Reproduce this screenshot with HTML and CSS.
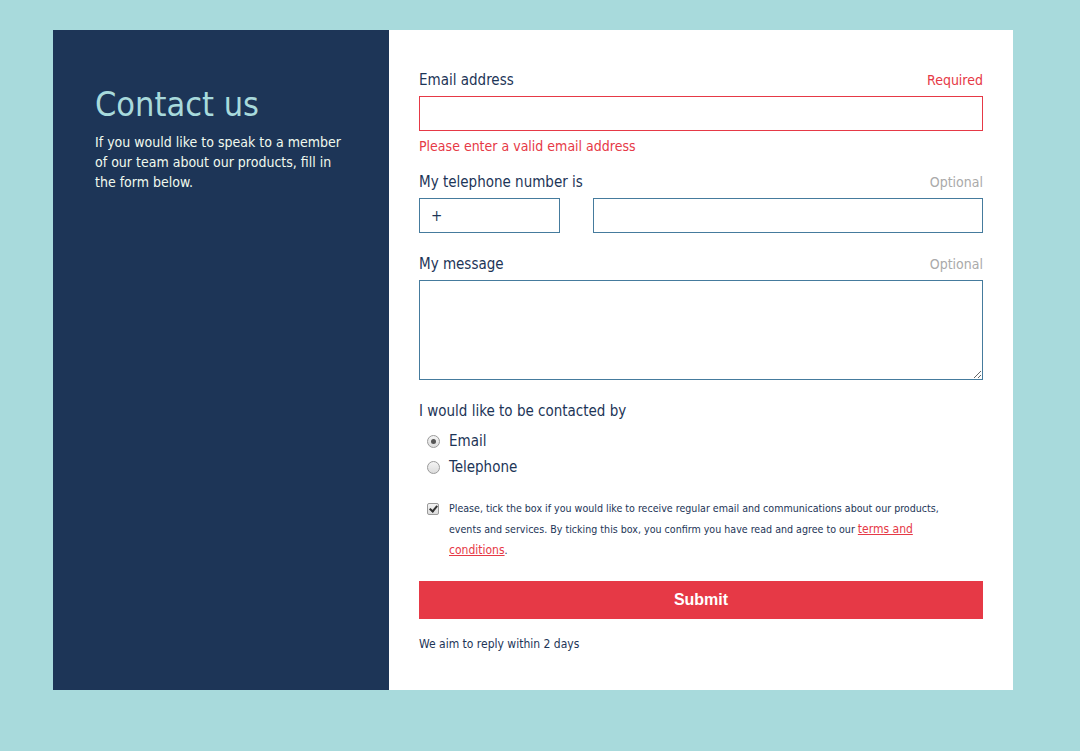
FILE: index.html
```html
<!DOCTYPE html>
<html lang="en">
<head>
<meta charset="utf-8">
<title>Contact us</title>
<link rel="stylesheet" href="styles.css">
</head>
<body>
<div class="card">
  <aside class="intro">
    <h1 class="intro-title">Contact us</h1>
    <p class="intro-text">If you would like to speak to a member of our team about our products, fill in the form below.</p>
  </aside>
  <form class="form">
    <div class="label-row">
      <label class="label" for="email">Email address</label>
      <span class="hint hint-required">Required</span>
    </div>
    <input id="email" class="field field-error" type="text">
    <div class="error">Please enter a valid email address</div>

    <div class="label-row label-row-gap">
      <label class="label" for="phone">My telephone number is</label>
      <span class="hint">Optional</span>
    </div>
    <div class="phone-row">
      <input class="field field-code" type="text" value="+">
      <input id="phone" class="field field-phone" type="text">
    </div>

    <div class="label-row label-row-gap2">
      <label class="label" for="msg">My message</label>
      <span class="hint">Optional</span>
    </div>
    <textarea id="msg" class="field field-area"></textarea>

    <div class="group-title">I would like to be contacted by</div>
    <div class="radios">
      <label class="radio-row"><input type="radio" name="by" class="radio" checked><span>Email</span></label>
      <label class="radio-row"><input type="radio" name="by" class="radio"><span>Telephone</span></label>
    </div>

    <label class="consent">
      <input type="checkbox" class="check" checked>
      <span class="consent-text">Please, tick the box if you would like to receive regular email and communications about our products, events and services. By ticking this box, you confirm you have read and agree to our <a href="#" class="terms">terms and conditions</a>.</span>
    </label>

    <button type="button" class="submit">Submit</button>
    <p class="note">We aim to reply within 2 days</p>
  </form>
</div>
</body>
</html>
```
FILE: styles.css
```css
* { box-sizing: border-box; }
html, body { margin: 0; padding: 0; }
body {
  background: #a8dadc;
  font-family: "DejaVu Sans Condensed", "DejaVu Sans", sans-serif;
  color: #1d3557;
  padding: 30px 0 0 53px;
  height: 751px;
}
.card {
  display: flex;
  width: 960px;
}
.intro {
  width: 336px;
  background: #1d3557;
  padding: 54px 40px 0 42px;
}
.intro-title {
  margin: 0;
  font-weight: normal;
  font-size: 34px;
  line-height: 40px;
  color: #a8dadc;
}
.intro-text {
  margin: 8px 0 0;
  width: 248px;
  font-size: 14px;
  line-height: 20px;
  color: #f1faee;
}
.form {
  flex: 1;
  background: #fff;
  padding: 40px 30px 36px;
  display: flex;
  flex-direction: column;
}
.label-row {
  display: flex;
  justify-content: space-between;
  align-items: center;
  height: 20px;
}
.label-row-gap { margin-top: 16px; }
.label-row-gap2 { margin-top: 21px; }
.label { font-size: 15px; color: #1d3557; }
.hint { font-size: 14px; color: #aaaaaa; }
.hint-required { color: #e63946; }
.field {
  display: block;
  margin-top: 6px;
  height: 35px;
  border: 1px solid #457b9d;
  border-radius: 0;
  font: 15px "DejaVu Sans Condensed", "DejaVu Sans", sans-serif;
  color: #1d3557;
  padding: 0 11px;
  outline: none;
  background: #fff;
}
.field-error { border-color: #e63946; width: 100%; }
.error {
  margin-top: 5px;
  font-size: 14px;
  line-height: 20px;
  color: #e63946;
}
.phone-row {
  display: flex;
  gap: 33px;
}
.field-code { width: 141px; }
.field-phone { flex: 1; }
.field-area {
  width: 100%;
  height: 100px;
  resize: both;
}
.group-title {
  margin-top: 21px;
  font-size: 15px;
  line-height: 20px;
}
.radios {
  margin-top: 7px;
  display: flex;
  flex-direction: column;
}
.radio-row {
  display: flex;
  align-items: center;
  height: 26px;
  font-size: 15px;
  padding-left: 8px;
}
.radio {
  appearance: none;
  margin: 0 9px 0 0;
  width: 13px;
  height: 13px;
  border-radius: 50%;
  border: 1px solid #9a9a9a;
  background: linear-gradient(#f4f4f4, #dcdcdc);
  display: grid;
  place-items: center;
}
.radio:checked::after {
  content: "";
  width: 5px;
  height: 5px;
  border-radius: 50%;
  background: #555;
}
.consent {
  margin-top: 18px;
  display: flex;
  align-items: flex-start;
  padding-left: 8px;
}
.check {
  appearance: none;
  flex: none;
  margin: 5px 10px 0 0;
  width: 12px;
  height: 12px;
  border: 1px solid #9a9a9a;
  border-radius: 2px;
  background: linear-gradient(#f4f4f4, #dcdcdc);
  position: relative;
}
.check:checked::after {
  content: "";
  position: absolute;
  left: 3px;
  top: 0px;
  width: 3px;
  height: 6px;
  border: solid #333;
  border-width: 0 2px 2px 0;
  transform: rotate(40deg);
}
.consent-text {
  width: 512px;
  font-size: 10.6px;
  line-height: 21px;
  color: #1d3557;
}
.terms {
  font-size: 12px;
  line-height: 1;
  color: #e63946;
}
.submit {
  margin-top: 20px;
  height: 38px;
  border: 0;
  background: #e63946;
  color: #fff;
  font: bold 16px "Liberation Sans", Arial, sans-serif;
  cursor: pointer;
}
.note {
  margin: 15px 0 0;
  font-size: 12px;
  line-height: 20px;
}
```
